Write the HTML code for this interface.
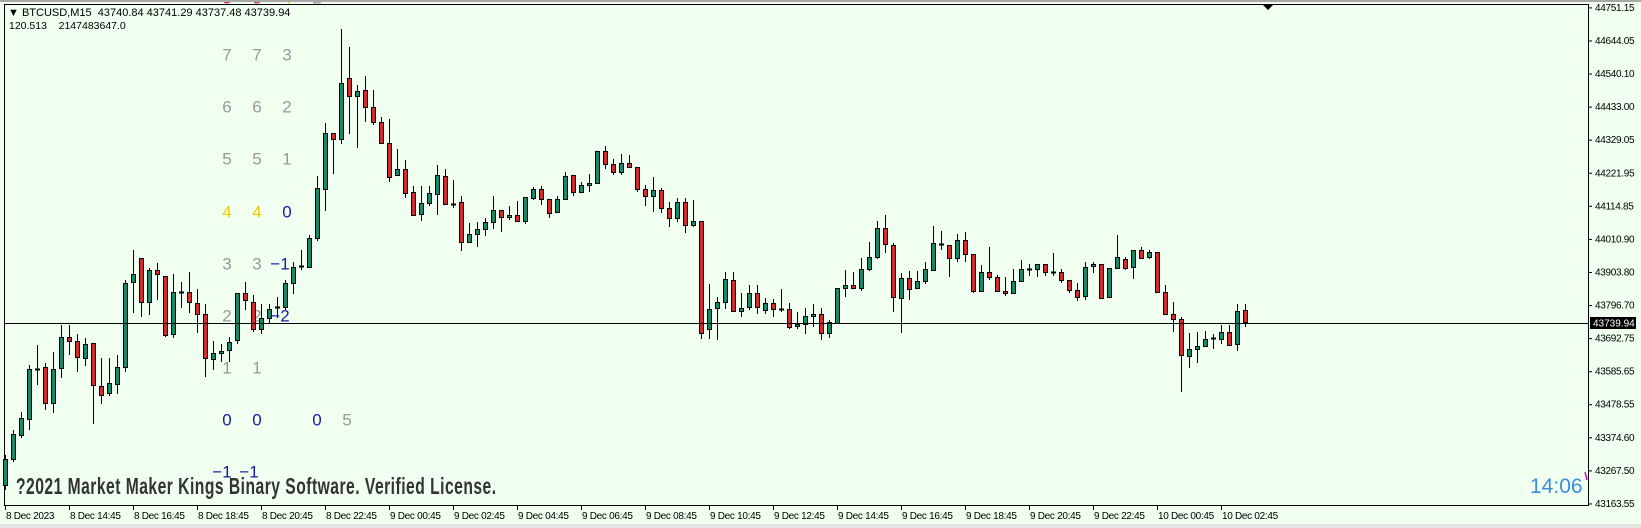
<!DOCTYPE html>
<html><head><meta charset="utf-8"><style>
html,body{margin:0;padding:0;background:#f0fff0;}
body{width:1641px;height:528px;overflow:hidden;position:relative;font-family:"Liberation Sans",sans-serif;}
svg{position:absolute;left:0;top:0;}
.pre{white-space:pre;}
</style></head><body>
<svg id="s" width="1641" height="528" xmlns="http://www.w3.org/2000/svg" font-family="Liberation Sans, sans-serif">
<rect x="0" y="0" width="1641" height="528" fill="#f0fff0"/>
<g id="ov" font-size="17" text-anchor="middle" dominant-baseline="central">
<text x="227" y="-2" fill="#d02020">o</text><text x="257" y="-2" fill="#d02020">o</text><text x="287" y="-2" fill="#f0c800">4</text><text x="317" y="-2" fill="#999">2</text>
<text x="227" y="55" fill="#999">7</text><text x="257" y="55" fill="#999">7</text><text x="287" y="55" fill="#999">3</text>
<text x="227" y="107" fill="#999">6</text><text x="257" y="107" fill="#999">6</text><text x="287" y="107" fill="#999">2</text>
<text x="227" y="159" fill="#999">5</text><text x="257" y="159" fill="#999">5</text><text x="287" y="159" fill="#999">1</text>
<text x="227" y="212" fill="#f0c800">4</text><text x="257" y="212" fill="#f0c800">4</text><text x="287" y="212" fill="#1a1aa0">0</text>
<text x="227" y="264" fill="#999">3</text><text x="257" y="264" fill="#999">3</text><text x="280" y="264" fill="#1a1aa0">−1</text>
<text x="227" y="316" fill="#999">2</text><text x="257" y="316" fill="#999">2</text><text x="280" y="316" fill="#1a1aa0">−2</text>
<text x="227" y="368" fill="#999">1</text><text x="257" y="368" fill="#999">1</text>
<text x="227" y="420" fill="#1a1aa0">0</text><text x="257" y="420" fill="#1a1aa0">0</text><text x="317" y="420" fill="#1a1aa0">0</text><text x="347" y="420" fill="#999">5</text>
<text x="222" y="472" fill="#1a1aa0">−1</text><text x="249" y="472" fill="#1a1aa0">−1</text>
</g>
<rect x="0" y="0" width="1641" height="2" fill="#a8a8a8"/>
<rect x="0" y="524" width="1641" height="4" fill="#e4e4e4"/>
<rect x="4.5" y="4.5" width="1584" height="501" fill="none" stroke="#000" stroke-width="1"/>
<g id="c"></g>
<line x1="5" y1="323.5" x2="1589" y2="323.5" stroke="#000" stroke-width="1"/>
<g id="ax" font-size="10" fill="#000"></g>
<rect x="1590" y="317" width="46" height="12" fill="#000"/>
<text x="1593" y="326.5" font-size="10" fill="#fff">43739.94</text>
<polygon points="1263,5 1273,5 1268,10" fill="#000"/>
<text class="pre" x="8" y="16" font-size="11" fill="#000">▼ BTCUSD,M15  43740.84 43741.29 43737.48 43739.94</text>
<text class="pre" x="9" y="29" font-size="10.5" fill="#000">120.513    2147483647.0</text>
<text x="16" y="494" font-size="23" font-weight="bold" fill="#333" transform="translate(16 0) scale(0.68 1) translate(-16 0)" textLength="706">?2021 Market Maker Kings Binary Software. Verified License.</text>
<text x="1530" y="493" font-size="21" fill="#3a8fe0">14:06</text>
<line x1="1585" y1="472" x2="1587" y2="480" stroke="#e000e0" stroke-width="1.5"/>
</svg>
<script>
var D=[[485,459,455,490],[459,434,430,462],[435,418,412,438],[419,369,365,430],[369,369,345,385],[367,403,363,410],[403,369,352,413],[368,337,325,378],[337,341,325,355],[341,357,334,372],[358,344,338,366],[343,385,343,424],[386,395,358,404],[393,383,358,396],[384,367,355,394],[367,283,280,372],[282,274,250,313],[258,302,258,317],[302,270,268,315],[270,274,263,300],[276,335,276,337],[334,292,274,338],[292,292,282,308],[292,302,272,313],[303,314,289,333],[314,358,304,377],[359,353,341,370],[353,351,344,362],[350,342,337,362],[340,293,293,344],[293,300,282,310],[302,329,295,332],[329,318,304,334],[318,309,304,323],[307,307,297,318],[307,283,280,310],[283,267,262,294],[266,266,250,270],[267,238,235,267],[238,188,176,241],[189,133,123,211],[133,139,133,174],[139,83,29,144],[78,96,47,134],[96,91,85,148],[90,107,76,122],[107,122,90,125],[122,143,117,143],[143,177,119,182],[175,169,149,175],[169,193,160,198],[192,215,186,215],[214,203,186,221],[203,193,186,206],[194,175,165,215],[176,204,169,205],[204,204,180,208],[202,242,196,251],[242,234,223,242],[234,229,222,247],[229,222,218,236],[222,210,196,229],[210,217,210,232],[217,215,206,220],[215,221,201,222],[221,197,197,224],[198,189,187,200],[189,199,186,205],[199,213,199,218],[212,199,196,212],[199,176,172,199],[175,192,175,196],[192,185,182,193],[185,183,174,192],[183,151,151,183],[151,164,146,169],[164,172,159,175],[172,163,154,175],[163,167,155,168],[167,189,167,192],[189,196,185,206],[196,190,177,212],[190,208,188,213],[208,218,202,227],[218,202,198,222],[202,225,198,233],[225,221,200,227],[221,333,221,339],[329,309,284,339],[308,302,297,340],[302,279,272,309],[280,311,272,311],[311,308,293,317],[307,293,285,310],[293,307,285,314],[310,303,298,314],[303,309,299,317],[309,309,289,312],[309,327,303,329],[326,324,312,329],[324,316,308,334],[316,314,304,327],[314,333,308,340],[333,322,320,338],[323,288,288,323],[288,285,270,297],[285,288,272,289],[288,269,258,291],[269,257,242,271],[257,228,221,259],[228,244,215,253],[245,297,243,312],[298,278,273,333],[278,289,271,300],[288,281,271,289],[281,269,262,284],[270,243,226,271],[244,244,231,250],[245,258,245,277],[258,240,234,262],[240,254,232,262],[254,291,254,293],[291,272,265,291],[272,277,247,280],[277,291,275,292],[291,293,277,296],[293,281,269,293],[281,269,260,281],[269,269,264,276],[269,264,264,277],[264,272,264,276],[272,272,253,276],[272,280,269,283],[280,290,280,293],[290,297,283,301],[296,267,262,300],[266,264,262,273],[264,298,264,299],[297,268,268,297],[268,257,235,268],[259,268,257,270],[267,250,250,279],[250,258,247,259],[257,252,250,259],[252,292,252,293],[292,314,285,314],[314,319,302,332],[319,355,317,392],[356,349,333,368],[349,346,332,363],[346,339,331,346],[338,338,334,349],[339,332,325,344],[332,345,325,345],[344,311,304,351],[310,322,304,327]];
var g=document.getElementById("c"),h="";
D.forEach(function(d,i){var x=5+8*i;var o=d[0],c=d[1],hi=d[2],lo=d[3];
h+='<line x1="'+(x+0.5)+'" y1="'+hi+'" x2="'+(x+0.5)+'" y2="'+lo+'" stroke="#000"/>';
if(o==c){h+='<line x1="'+(x-2)+'" y1="'+(o+0.5)+'" x2="'+(x+3)+'" y2="'+(o+0.5)+'" stroke="#000" stroke-width="2"/>';}
else{var t=Math.min(o,c),b=Math.max(o,c);h+='<rect x="'+(x-1.5)+'" y="'+(t+0.5)+'" width="4" height="'+Math.max(b-t,2)+'" fill="'+(c<o?"#138a6c":"#d42a2a")+'" stroke="#000" stroke-width="1"/>';}
});
g.innerHTML=h;
var P=["44751.15","44644.05","44540.10","44433.00","44329.05","44221.95","44114.85","44010.90","43903.80","43796.70","43692.75","43585.65","43478.55","43374.60","43267.50","43163.55"];
var a="";P.forEach(function(p,i){var y=7.4+33.07*i;a+='<line x1="1589" y1="'+(y+0.5)+'" x2="1592" y2="'+(y+0.5)+'" stroke="#000"/><text x="1595" y="'+(y+3.5)+'" font-size="10" letter-spacing="-0.3">'+p+'</text>';});
var L=["8 Dec 2023","8 Dec 14:45","8 Dec 16:45","8 Dec 18:45","8 Dec 20:45","8 Dec 22:45","9 Dec 00:45","9 Dec 02:45","9 Dec 04:45","9 Dec 06:45","9 Dec 08:45","9 Dec 10:45","9 Dec 12:45","9 Dec 14:45","9 Dec 16:45","9 Dec 18:45","9 Dec 20:45","9 Dec 22:45","10 Dec 00:45","10 Dec 02:45"];
L.forEach(function(l,i){var x=5+64*i;a+='<line x1="'+(x+0.5)+'" y1="506" x2="'+(x+0.5)+'" y2="510" stroke="#000"/><text x="'+(x+1)+'" y="519" font-size="10" letter-spacing="-0.3">'+l+'</text>';});
document.getElementById("ax").innerHTML=a;
</script>
</body></html>
